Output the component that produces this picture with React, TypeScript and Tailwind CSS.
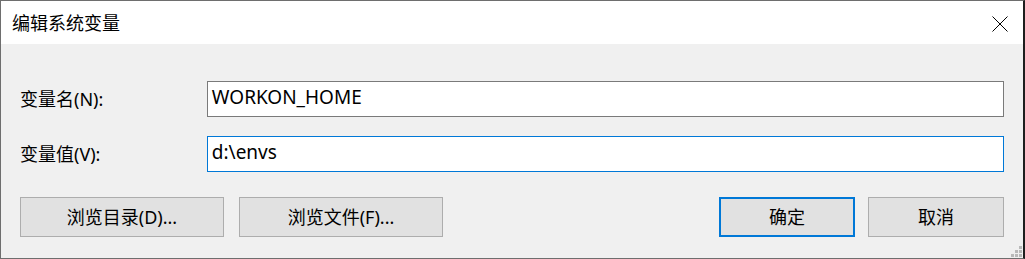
import React from 'react'

const font = { fontFamily: '"Noto Sans", "Noto Sans CJK SC", sans-serif' }

const Field = ({ label, value, focused }: { label: string; value: string; focused?: boolean }) => (
  <div className="flex items-center">
    <div className="w-[187px] text-[18px] leading-none text-black">{label}</div>
    <div
      className={`flex h-[36px] w-[798px] items-center bg-white pb-[3px] pl-[4px] text-[19px] leading-none text-black border ${
        focused ? 'border-[#0078d7]' : 'border-[#7a7a7a]'
      }`}
    >
      {value}
    </div>
  </div>
)

const Btn = ({ children, primary, wide }: { children: React.ReactNode; primary?: boolean; wide?: boolean }) => (
  <button
    className={`flex h-[40px] items-center justify-center bg-[#e1e1e1] text-[18px] leading-none text-black ${
      wide ? 'w-[204px]' : 'w-[136px]'
    } ${primary ? 'border-2 border-[#0078d7]' : 'border border-[#adadad]'}`}
  >
    {children}
  </button>
)

export default function App() {
  return (
    <div
      className="flex h-[259px] w-[1025px] flex-col overflow-hidden border-l border-t border-b border-r-2 border-l-[#6e6e6e] border-t-[#6e6e6e] border-b-[#6e6e6e] border-r-[#1e1e1e] bg-[#f0f0f0]"
      style={font}
    >
      {/* Title bar */}
      <div className="flex h-[43px] shrink-0 items-center justify-between bg-white pl-[11px] pr-[15px]">
        <span className="text-[18px] leading-none text-black">编辑系统变量</span>
        <svg width="16" height="16" viewBox="0 0 16 16" className="mt-[2px]">
          <path d="M0.5 0.5 L15.5 15.5 M15.5 0.5 L0.5 15.5" stroke="#000" strokeWidth="1" fill="none" />
        </svg>
      </div>

      {/* Body */}
      <div className="relative flex flex-1 flex-col pl-[19px] pr-[19px] pt-[37px]">
        <div className="flex flex-col gap-[19px]">
          <Field label="变量名(N):" value="WORKON_HOME" />
          <Field label="变量值(V):" value="d:\envs" focused />
        </div>

        <div className="mt-[25px] flex items-center">
          <div className="flex gap-[15px]">
            <Btn wide>浏览目录(D)...</Btn>
            <Btn wide>浏览文件(F)...</Btn>
          </div>
          <div className="ml-auto flex gap-[13px]">
            <Btn primary>确定</Btn>
            <Btn>取消</Btn>
          </div>
        </div>

        {/* Resize grip */}
        <svg width="11" height="11" viewBox="0 0 11 11" className="absolute bottom-[1px] right-[1px]">
          <rect x="8" y="0" width="3" height="3" fill="#b9b9b9" />
          <rect x="4" y="4" width="3" height="3" fill="#b9b9b9" />
          <rect x="8" y="4" width="3" height="3" fill="#b9b9b9" />
          <rect x="0" y="8" width="3" height="3" fill="#b9b9b9" />
          <rect x="4" y="8" width="3" height="3" fill="#b9b9b9" />
          <rect x="8" y="8" width="3" height="3" fill="#b9b9b9" />
        </svg>
      </div>
    </div>
  )
}
